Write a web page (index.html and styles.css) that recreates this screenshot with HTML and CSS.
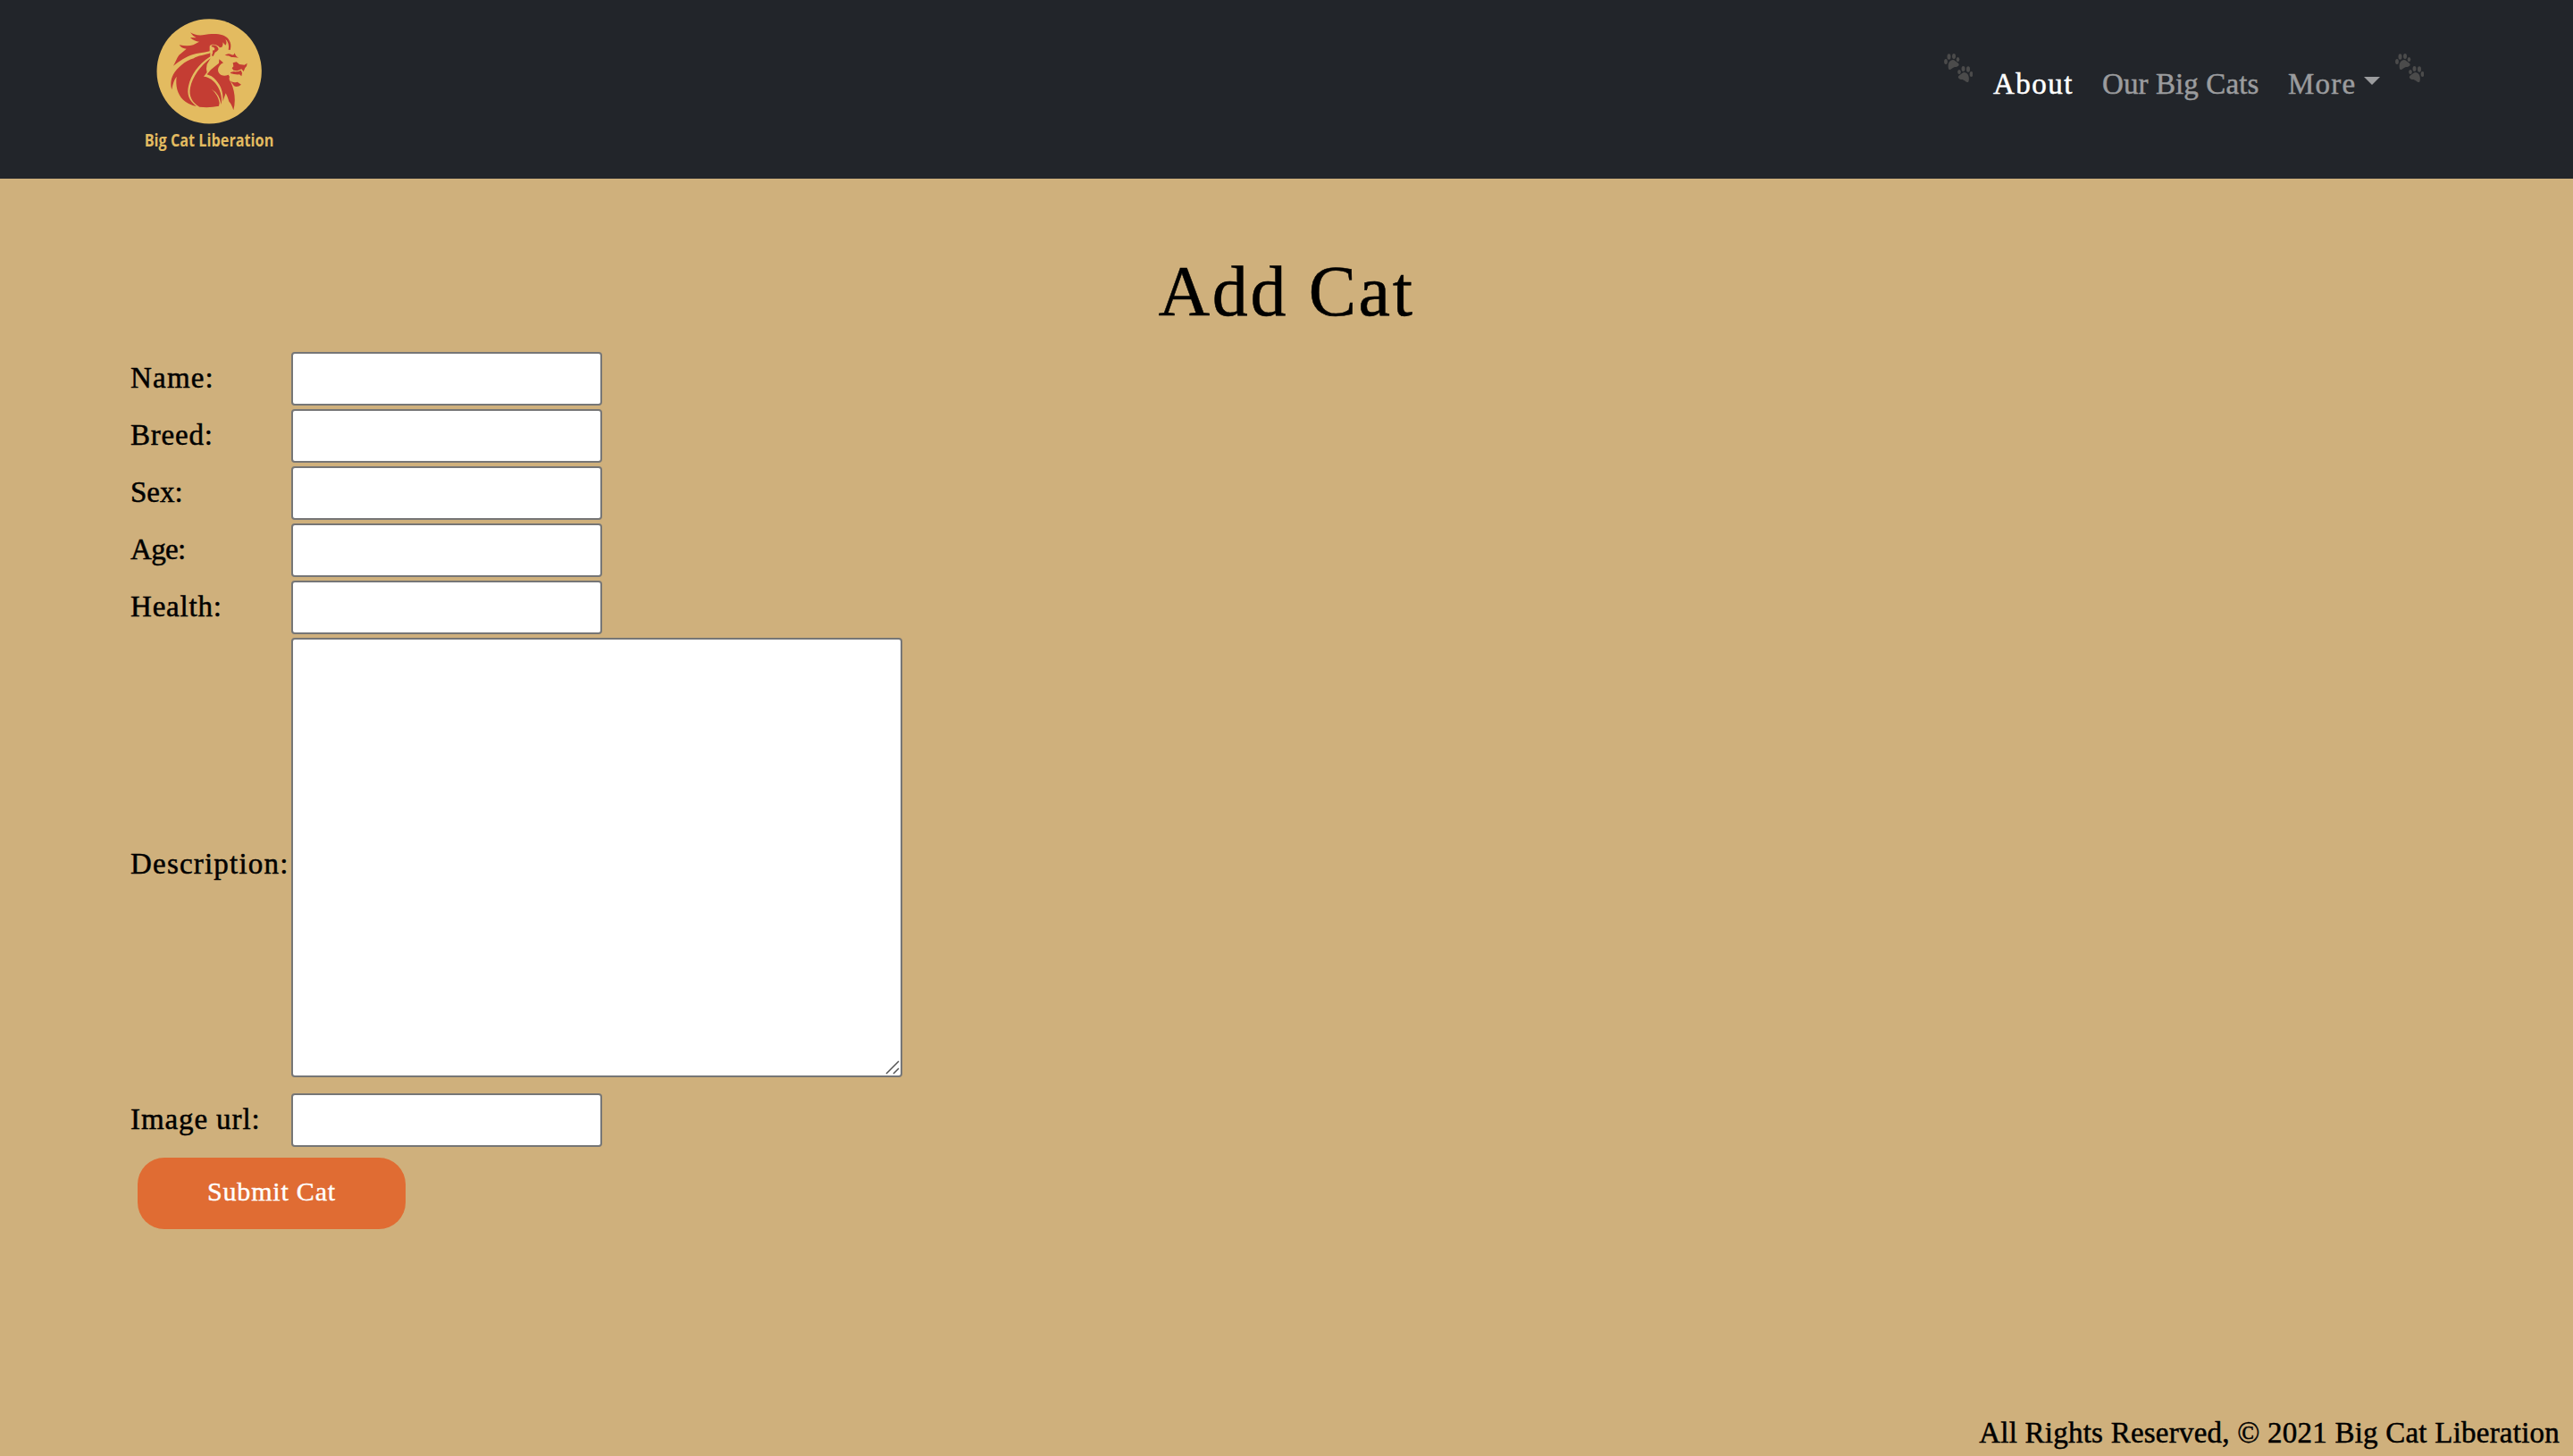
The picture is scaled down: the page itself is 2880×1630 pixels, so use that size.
FILE: index.html
```html
<!DOCTYPE html>
<html lang="en">
<head>
<meta charset="utf-8">
<title>Big Cat Liberation</title>
<link rel="stylesheet" href="styles.css">
</head>
<body>
<header class="navbar">
  <a class="brand" aria-label="Big Cat Liberation">
    <svg class="logo" viewBox="0 0 600 600">
      <circle cx="282.500" cy="239.500" r="176" fill="#e3bb60"/>
      <g fill="#c43d33">
        <path d="M219 109Q235 120 260 118C300 111 332 113 346 130C357 144 356 157 353 168L347 167C350 151 346 139 337 132Q344 145 337 152L328 142Q330 151 325 158L318 160C310 148 290 145 284 155L284 172C260 178 242 178 228 183C204 190 183 205 162 221C170 207 173 196 181 185L206 164Q191 164 182 151Q210 157 229 151L249 140Q232 139 219 126L239 127Q226 120 219 109Z"/>
        <path d="M286 178C276 183 239 188 231 196C200 204 175 229 162 250C153 267 152 285 157 301Q161 273 173 257C169 288 175 315 195 335Q213 352 240 357C214 339 207 316 213 289C222 251 244 218 286 190Z"/>
        <path d="M287 196C254 219 226 259 219 294C213 323 225 344 250 359Q283 363 315 356L317 346C314 328 306 313 290 299Q317 314 323 351C330 310 305 267 271 258L264 257L275 243Q271 231 275 216Z"/>
        <path d="M316 199L330 211Q314 218 312 235C313 252 330 259 347 251L351 258Q347 267 355 276C369 306 372 339 364 370Q357 348 349 341Q344 324 338 313L328 341C332 302 314 273 290 256L275 250L288 234L315 212Z"/>
        <path d="M290 153C300 149 313 155 314 166Q306 176 302 176L296 189L291 187Q296 177 294 169Q301 172 301 163Q298 157 291 157Z"/>
        <path d="M335 185Q346 177 357 183Q365 188 368 178Q371 190 381 194Q366 191 357 192Q348 187 335 185ZM362 211L374 208L384 216L401 218L410 212Q410 223 403 228L398 240L391 232L377 238L364 236L359 229L364 223ZM354 243L365 240Q377 242 389 236L393 245L391 256L384 250Q367 251 354 246ZM353 271Q363 280 377 275L390 284Q378 294 366 289Z"/>
      </g>
      <text class="logo-name" x="65" y="492" textLength="434" lengthAdjust="spacingAndGlyphs">Big Cat Liberation</text>
    </svg>
  </a>
  <nav class="menu">
    <svg class="paws" viewBox="0 0 32 32"><use href="#paw"/><use href="#paw" transform="translate(32.500 14) scale(-1 1)"/>
      <defs><g id="paw"><path d="M5 17C4 13 5 9 8 7.500C11 6 12 8 15 10C19 13 15 15 12 15C9 16 6 20 5 17Z"/><ellipse cx="2" cy="9" rx="1.900" ry="3"/><ellipse cx="5.500" cy="3.500" rx="2" ry="3.200"/><ellipse cx="11" cy="3" rx="2" ry="3"/><ellipse cx="15.500" cy="6.500" rx="1.800" ry="2.500"/></g></defs>
    </svg>
    <a class="link active">About</a>
    <a class="link cats">Our Big Cats</a>
    <a class="link more">More<svg class="caret" viewBox="0 0 18 9"><path d="M0 0H18L9 9Z"/></svg></a>
    <svg class="paws last" viewBox="0 0 32 32"><use href="#paw"/><use href="#paw" transform="translate(32.500 14) scale(-1 1)"/></svg>
  </nav>
</header>
<main>
  <h1>Add Cat</h1>
  <form class="cat-form">
    <label class="l-name" for="name">Name:</label><input id="name">
    <label class="l-breed" for="breed">Breed:</label><input id="breed">
    <label class="l-sex" for="sex">Sex:</label><input id="sex">
    <label class="l-age" for="age">Age:</label><input id="age">
    <label class="l-health" for="health">Health:</label><input id="health">
    <label class="l-desc" for="desc">Description:</label>
    <div class="area"><textarea id="desc"></textarea><svg class="grip" viewBox="0 0 16 16"><path d="M1 15L15 1M9 15L15 9"/></svg></div>
    <label class="l-url" for="url">Image url:</label><input id="url" class="url">
    <button type="button">Submit Cat</button>
  </form>
</main>
<footer>All Rights Reserved, © 2021 Big Cat Liberation</footer>
</body>
</html>
```
FILE: styles.css
```css
* { box-sizing: border-box; }
body {
  margin: 0;
  height: 1630px;
  display: flex;
  flex-direction: column;
  overflow: hidden;
  background: #cfb07c;
  color: #000;
  font-family: "Liberation Serif", serif;
  font-size: 33px;
  -webkit-text-stroke: 0.5px currentColor;
}
.navbar {
  height: 200px;
  flex: none;
  display: flex;
  justify-content: space-between;
  padding: 0 167px 0 140px;
  background: #22252a;
}
.logo { width: 200px; height: 200px; display: block; }
.logo-name { font: 700 60px "Open Sans", sans-serif; fill: #e3bb60; -webkit-text-stroke: 0; }
.menu { display: flex; align-items: flex-start; padding-top: 60px; }
.paws { width: 32px; height: 32px; fill: #4b4b4b; margin-right: 23px; -webkit-text-stroke: 0; }
.paws.last { margin: 0 0 0 17px; }
.link { line-height: 40px; margin-top: 14px; color: #9b9c9e; white-space: nowrap; }
.active { width: 122px; color: #fff; letter-spacing: 1.500px; }
.cats { width: 208px; letter-spacing: 0.100px; }
.more { width: 103px; letter-spacing: 1.200px; display: flex; justify-content: space-between; }
.caret { width: 18px; height: 9px; margin-top: 12px; fill: #9b9c9e; }
main { flex: 1; padding: 80px 146px 0; }
h1 { margin: 0; text-align: center; font-size: 80px; font-weight: 400; line-height: 92px; letter-spacing: 2.600px; }
.cat-form {
  display: grid;
  grid-template-columns: 176px 1fr;
  column-gap: 4px;
  row-gap: 4px;
  align-items: center;
  margin-top: 22px;
}
input, textarea { border: 2px solid #767676; border-radius: 4px; background: #fff; display: block; }
input { width: 348px; height: 60px; }
.area { position: relative; width: 684px; height: 492px; }
textarea { width: 684px; height: 492px; resize: none; }
.grip { position: absolute; right: 3px; bottom: 3px; width: 16px; height: 16px; fill: none; stroke: #555; stroke-width: 1.500; }
.url, .l-url { margin-top: 14px; }
label { line-height: 40px; white-space: nowrap; position: relative; top: -1px; }
.l-name { letter-spacing: 1.200px; }
.l-breed, .l-health { letter-spacing: 0.800px; }
.l-desc { letter-spacing: 1.200px; padding-top: 16px; }
.l-age { letter-spacing: -0.700px; }
.l-url { letter-spacing: 0.900px; }
button {
  grid-column: 1 / -1;
  width: 300px;
  height: 80px;
  margin: 8px 0 0 8px;
  padding: 0 0 4px;
  border: 0;
  border-radius: 30px;
  background: #e06c33;
  color: #fff;
  font: 30px "Liberation Serif", serif;
  letter-spacing: 0.800px;
  -webkit-text-stroke: 0.4px currentColor;
}
footer { text-align: right; padding-right: 15px; line-height: 40px; height: 46px; letter-spacing: 0.230px; }
```
